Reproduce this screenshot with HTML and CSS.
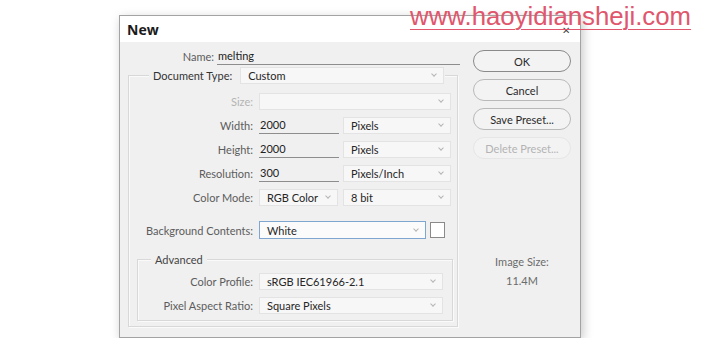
FILE: index.html
```html
<!DOCTYPE html>
<html lang="en">
<head>
    <meta charset="UTF-8">
    <title>New</title>
    <link rel="stylesheet" href="styles.css">
</head>
<body>
    <!-- watermark over the dialog -->
    <div class="watermark">www.haoyidiansheji.com</div>

    <div class="dialog">
        <div class="titlebar">
            <span>New</span>
            <span class="close">&#x2715;</span>
        </div>
        <div class="content">
            <div class="main">
                <div class="row name-row">
                    <label class="lbl name-lbl">Name:</label>
                    <div class="field name-field">melting</div>
                </div>

                <div class="group">
                    <div class="legend">
                        <label class="lbl legend-lbl">Document Type:</label>
                        <div class="select doc-type"><span>Custom</span><i class="chev"></i></div>
                    </div>

                    <div class="row first">
                        <label class="lbl off">Size:</label>
                        <div class="select w-full"><span></span><i class="chev"></i></div>
                    </div>
                    <div class="row">
                        <label class="lbl">Width:</label>
                        <div class="field w-num">2000</div>
                        <div class="select w-unit"><span>Pixels</span><i class="chev"></i></div>
                    </div>
                    <div class="row">
                        <label class="lbl">Height:</label>
                        <div class="field w-num">2000</div>
                        <div class="select w-unit"><span>Pixels</span><i class="chev"></i></div>
                    </div>
                    <div class="row">
                        <label class="lbl">Resolution:</label>
                        <div class="field w-num">300</div>
                        <div class="select w-unit"><span>Pixels/Inch</span><i class="chev"></i></div>
                    </div>
                    <div class="row">
                        <label class="lbl">Color Mode:</label>
                        <div class="select w-mode"><span>RGB Color</span><i class="chev"></i></div>
                        <div class="select w-unit"><span>8 bit</span><i class="chev"></i></div>
                    </div>
                    <div class="row bg-row">
                        <label class="lbl">Background Contents:</label>
                        <div class="select w-bg focus"><span>White</span><i class="chev"></i></div>
                        <div class="swatch"></div>
                    </div>

                    <div class="advanced">
                        <div class="legend adv-legend">
                            <label class="legend-lbl">Advanced</label>
                        </div>
                        <div class="row">
                            <label class="lbl">Color Profile:</label>
                            <div class="select w-adv"><span>sRGB IEC61966-2.1</span><i class="chev"></i></div>
                        </div>
                        <div class="row">
                            <label class="lbl">Pixel Aspect Ratio:</label>
                            <div class="select w-adv"><span>Square Pixels</span><i class="chev"></i></div>
                        </div>
                    </div>
                </div>
            </div>

            <div class="side">
                <button class="btn default">OK</button>
                <button class="btn">Cancel</button>
                <button class="btn">Save Preset...</button>
                <button class="btn disabled">Delete Preset...</button>
                <div class="img-size">
                    <p>Image Size:</p>
                    <p class="size-val">11.4M</p>
                </div>
            </div>
        </div>
    </div>
</body>
</html>
```

FILE: styles.css
```css
body {
    margin: 0;
    background: #fff;
    font-family: Lato, "Open Sans", sans-serif;
    font-size: 11px;
    color: #333;
}

.watermark {
    position: absolute;
    left: 410px;
    top: 1px;
    font-family: "Liberation Sans", Arial, sans-serif;
    font-size: 25.8px;
    line-height: 30px;
    color: #e0566c;
    text-decoration: underline;
    text-decoration-thickness: 1px;
    text-underline-offset: 4px;
    z-index: 2;
}

.dialog {
    margin: 15px 0 0 119px;
    width: 460px;
    height: 321px;
    border: 1px solid #a3a3a3;
    background: #f0f0f0;
    box-shadow: 2px 3px 10px rgba(0, 0, 0, 0.22);
    display: flex;
    flex-direction: column;
}

.titlebar {
    height: 26px;
    background: #fff;
    display: flex;
    align-items: center;
    justify-content: space-between;
    padding: 0 10px 0 7px;
    font-family: "Open Sans", sans-serif;
    font-size: 14px;
    font-weight: bold;
    color: #1a1a1a;
}
.close { font-size: 10px; font-weight: normal; color: #444; margin-top: 2px; }

.content { display: flex; flex: 1; }
.main { width: 340px; }
.side {
    width: 98px;
    padding: 8px 0 0 13px;
    display: flex;
    flex-direction: column;
}

/* rows */
.row { display: flex; align-items: center; height: 18px; margin-top: 6px; }
.row.first { margin-top: 8px; }
.lbl {
    width: 130px;
    text-align: right;
    padding-right: 6px;
    box-sizing: border-box;
    color: #5c5c5c;
    white-space: nowrap;
}
.lbl.off { color: #b4b4b4; }

.name-row { margin: 5px 0 0 0; }
.name-lbl { width: 97px; padding-right: 3px; }
.name-field { width: 243px; }

.field {
    height: 17px;
    line-height: 16px;
    padding-left: 1px;
    border-bottom: 1px solid #8d8d8d;
    color: #222;
    box-sizing: border-box;
}
.w-num { width: 80px; margin-right: 4px; }

.select {
    height: 17px;
    background: #f7f7f7;
    border: 1px solid #e3e3e3;
    box-sizing: border-box;
    display: flex;
    align-items: center;
    justify-content: space-between;
    padding: 0 7px 0 7px;
    color: #262626;
}
.chev {
    width: 3px;
    height: 3px;
    border-right: 1px solid #b5b5b5;
    border-bottom: 1px solid #b5b5b5;
    transform: rotate(45deg);
    margin-top: -2px;
}
.w-full { width: 192px; }
.w-unit { width: 108px; }
.w-mode { width: 79px; margin-right: 5px; }
.w-bg { width: 167px; height: 18px; }
.w-adv { width: 184px; }
.focus { border-color: #7fa6cf; background: #fbfbfb; }
.swatch {
    width: 13px;
    height: 14px;
    margin-left: 4px;
    background: #fff;
    border: 1px solid #8a8a8a;
}

/* group boxes */
.group {
    margin: 10px 0 0 8px;
    width: 328px;
    height: 250px;
    border: 1px solid #d8d8d8;
    box-shadow: inset 1px 1px 0 #fafafa, 1px 1px 0 #fafafa;
}
.legend {
    display: flex;
    align-items: center;
    height: 18px;
    width: 296px;
    margin: -10px 0 0 20px;
    background: #f0f0f0;
}
.legend-lbl { width: auto; padding: 0 6px 0 4px; color: #333; }
.doc-type { width: 204px; margin-left: 2px; }

.bg-row { margin-top: 15px; height: 18px; }

.advanced {
    margin: 20px 0 0 8px;
    width: 314px;
    height: 60px;
    border: 1px solid #d8d8d8;
    box-shadow: inset 1px 1px 0 #fafafa, 1px 1px 0 #fafafa;
}
.adv-legend { width: fit-content; margin: -10px 0 0 13px; }
.advanced .legend-lbl { color: #444; padding-right: 4px; }
.advanced .row { margin-top: 4px; }
.advanced .row + .row { margin-top: 6px; }
.advanced .lbl { width: 121px; }

/* buttons */
.btn {
    width: 98px;
    height: 22px;
    margin-bottom: 7px;
    border: 1px solid #b9b9b9;
    border-radius: 11px;
    background: #f3f3f3;
    font-family: inherit;
    font-size: 11px;
    color: #2b2b2b;
    padding: 0;
}
.btn.default { border-color: #8a8a8a; }
.btn.disabled { border-color: #e6e6e6; color: #b3b3b3; }

.img-size { margin-top: 89px; text-align: center; color: #6b6b6b; }
.img-size p { margin: 0; line-height: 14px; }
.img-size .size-val { margin-top: 5px; }
```
